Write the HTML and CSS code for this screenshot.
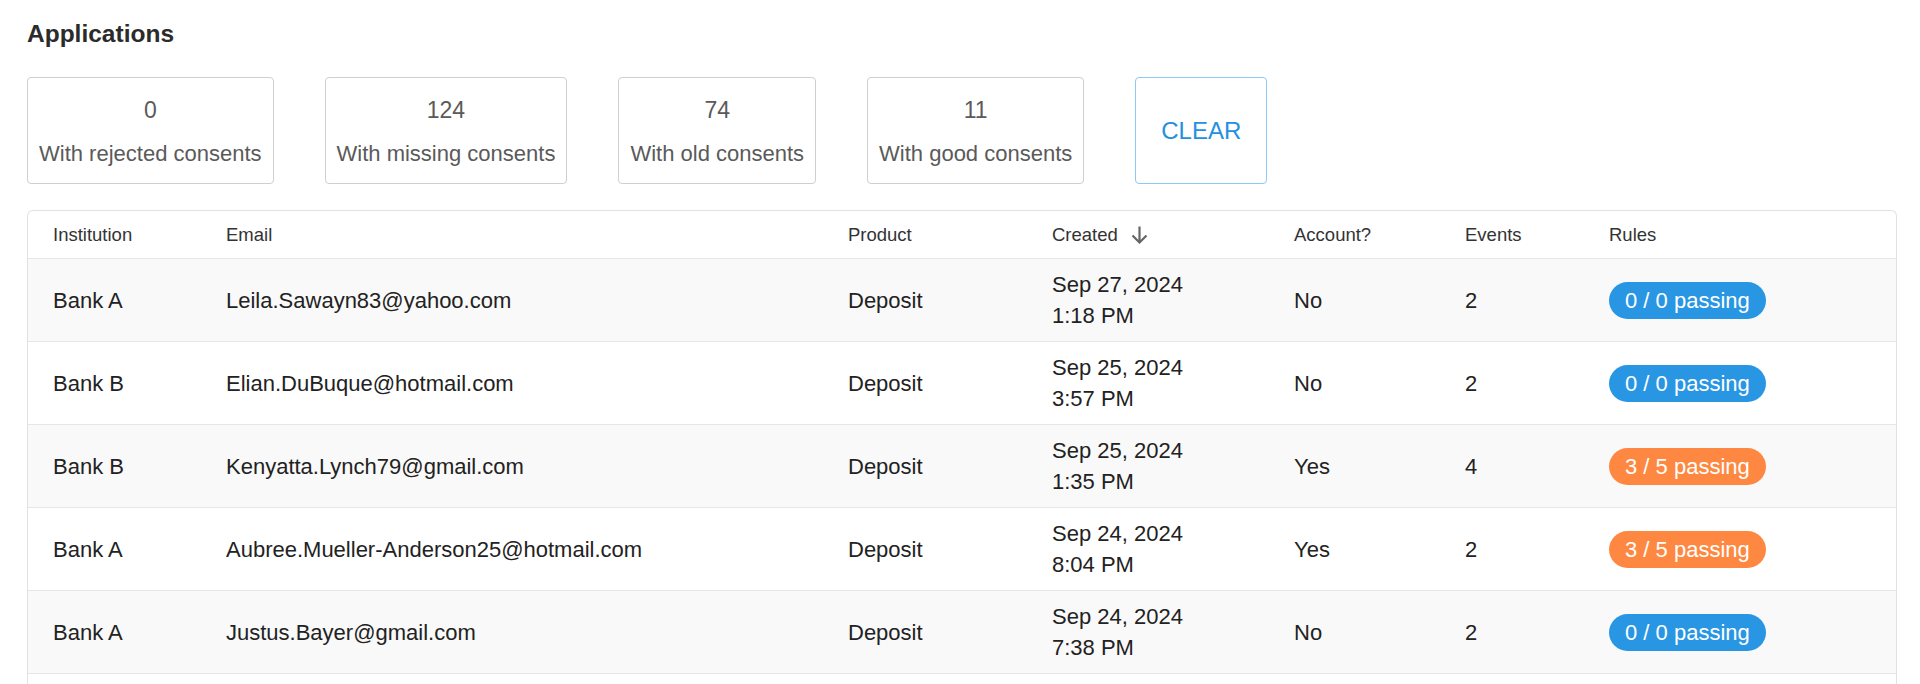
FILE: index.html
```html
<html>
<head>
	<title>Applications</title>
	<link rel="stylesheet" href="styles.css">
</head>
<body>

<div class="page">
	<h1 class="title">Applications</h1>

	<div class="filters">
		<div class="filter">
			<div class="count">0</div>
			<div class="label">With rejected consents</div>
		</div>
		<div class="filter">
			<div class="count">124</div>
			<div class="label">With missing consents</div>
		</div>
		<div class="filter">
			<div class="count">74</div>
			<div class="label">With old consents</div>
		</div>
		<div class="filter">
			<div class="count">11</div>
			<div class="label">With good consents</div>
		</div>
		<div class="clear">CLEAR</div>
	</div>

	<div class="table-card">
		<table class="apps">
			<colgroup>
				<col class="c-inst">
				<col class="c-email">
				<col class="c-product">
				<col class="c-created">
				<col class="c-account">
				<col class="c-events">
				<col class="c-rules">
			</colgroup>
			<thead>
				<tr>
					<th>Institution</th>
					<th>Email</th>
					<th>Product</th>
					<th>
						<span class="sort">Created
							<svg class="sort-icon" width="19" height="19" viewBox="0 0 19 19">
								<path d="M9.5 1.5V17M2.5 10.5l7 7 7-7" fill="none" stroke="#666" stroke-width="2.2"/>
							</svg>
						</span>
					</th>
					<th>Account?</th>
					<th>Events</th>
					<th>Rules</th>
				</tr>
			</thead>
			<tbody>
				<tr>
					<td>Bank A</td>
					<td>Leila.Sawayn83@yahoo.com</td>
					<td>Deposit</td>
					<td>Sep 27, 2024<br>1:18 PM</td>
					<td>No</td>
					<td>2</td>
					<td><span class="badge blue">0 / 0 passing</span></td>
				</tr>
				<tr>
					<td>Bank B</td>
					<td>Elian.DuBuque@hotmail.com</td>
					<td>Deposit</td>
					<td>Sep 25, 2024<br>3:57 PM</td>
					<td>No</td>
					<td>2</td>
					<td><span class="badge blue">0 / 0 passing</span></td>
				</tr>
				<tr>
					<td>Bank B</td>
					<td>Kenyatta.Lynch79@gmail.com</td>
					<td>Deposit</td>
					<td>Sep 25, 2024<br>1:35 PM</td>
					<td>Yes</td>
					<td>4</td>
					<td><span class="badge orange">3 / 5 passing</span></td>
				</tr>
				<tr>
					<td>Bank A</td>
					<td>Aubree.Mueller-Anderson25@hotmail.com</td>
					<td>Deposit</td>
					<td>Sep 24, 2024<br>8:04 PM</td>
					<td>Yes</td>
					<td>2</td>
					<td><span class="badge orange">3 / 5 passing</span></td>
				</tr>
				<tr>
					<td>Bank A</td>
					<td>Justus.Bayer@gmail.com</td>
					<td>Deposit</td>
					<td>Sep 24, 2024<br>7:38 PM</td>
					<td>No</td>
					<td>2</td>
					<td><span class="badge blue">0 / 0 passing</span></td>
				</tr>
				<tr class="more">
					<td></td><td></td><td></td><td></td><td></td><td></td><td></td>
				</tr>
			</tbody>
		</table>
	</div>
</div>

</body>
</html>
```

FILE: styles.css
```css
body {
	margin: 0;
	background: #fff;
	font-family: "Liberation Sans", Arial, sans-serif;
	color: #222;
}

.page {
	padding: 20px 23px 0 27px;
}

.title {
	margin: 0;
	font-size: 24.5px;
	line-height: 28px;
	font-weight: bold;
	color: #2b2b2b;
}

/* filter boxes */
.filters {
	display: flex;
	gap: 51px;
	margin-top: 29px;
}

.filter {
	border: 1px solid #cfcfcf;
	border-radius: 4px;
	padding: 18px 11px 15px;
	text-align: center;
	color: #5a5a5a;
}

.filter .count {
	font-size: 23px;
	line-height: 28px;
}

.filter .label {
	font-size: 22px;
	line-height: 28px;
	margin-top: 16px;
}

.clear {
	display: flex;
	align-items: center;
	justify-content: center;
	border: 1px solid #90c8f4;
	border-radius: 4px;
	padding: 0 25px;
	font-size: 24px;
	color: #2490e0;
}

/* table */
.table-card {
	margin-top: 26px;
	border: 1px solid #e2e2e2;
	border-bottom: none;
	border-radius: 6px 6px 0 0;
	overflow: hidden;
}

table.apps {
	width: 100%;
	table-layout: fixed;
	border-collapse: collapse;
}

col.c-inst { width: 173px; }
col.c-email { width: 622px; }
col.c-product { width: 204px; }
col.c-created { width: 242px; }
col.c-account { width: 171px; }
col.c-events { width: 144px; }

table.apps th {
	text-align: left;
	font-weight: normal;
	font-size: 18.5px;
	line-height: 21px;
	color: #333;
	padding: 13px 0 13px 25px;
	border-bottom: 1px solid #e6e6e6;
}

table.apps td {
	font-size: 22px;
	line-height: 31px;
	padding: 10px 0 10px 25px;
	vertical-align: middle;
	border-bottom: 1px solid #e6e6e6;
	white-space: nowrap;
}

table.apps tbody tr:nth-child(odd) {
	background: #f9f9f9;
}

table.apps tr.more td {
	height: 62px;
}

.sort {
	display: inline-flex;
	align-items: center;
	gap: 12px;
}

.sort-icon {
	display: block;
}

.badge {
	display: inline-block;
	height: 37px;
	line-height: 37px;
	padding: 0 16px;
	border-radius: 19px;
	color: #fff;
	font-size: 22px;
}

.badge.blue {
	background: #2896e3;
}

.badge.orange {
	background: #fe8841;
}
```
